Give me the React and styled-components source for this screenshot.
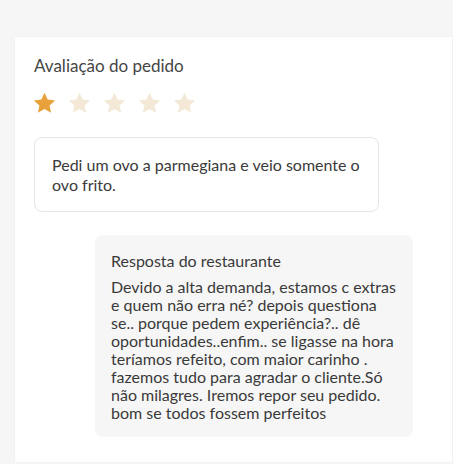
import React from 'react';
import styled, { createGlobalStyle } from 'styled-components';

const GlobalStyle = createGlobalStyle`
  html, body {
    margin: 0;
    padding: 0;
    background: #f6f6f6;
  }
  body {
    font-family: Lato, "Noto Sans", sans-serif;
    color: #3e3e3e;
  }
`;

const Page = styled.div`
  width: 453px;
  height: 464px;
  padding: 37px 1px 2px 15px;
  box-sizing: border-box;
  display: flex;
`;

const Card = styled.div`
  flex: 1;
  background: #fff;
  padding: 19px 19px 0 19px;
  box-shadow: 0 0 2px rgba(0, 0, 0, 0.05);
  display: flex;
  flex-direction: column;
`;

const Title = styled.h2`
  margin: 0;
  font-size: 17px;
  font-weight: 400;
  line-height: 20px;
  color: #454545;
`;

const Stars = styled.div`
  display: flex;
  gap: 12px;
  margin: 16px 0 0 -1px;
`;

const Star = ({ filled }) => (
  <svg width="23" height="22" viewBox="0 0 24 23">
    <path
      d="M12 0.8l3.3 7.1 7.8 0.9-5.8 5.3 1.6 7.7L12 17.9l-6.9 3.9 1.6-7.7L0.9 8.8l7.8-0.9z"
      fill={filled ? '#e9a23b' : '#f4e8d6'}
    />
  </svg>
);

const CommentBox = styled.div`
  margin-top: 23px;
  width: 345px;
  box-sizing: border-box;
  border: 1px solid #e6e6e6;
  border-radius: 8px;
  padding: 17px 17px 16px 17px;
  font-size: 16px;
  line-height: 20px;
  color: #3a3a3a;
`;

const Reply = styled.div`
  margin: 23px 0 0 61px;
  width: 318px;
  box-sizing: border-box;
  background: #f6f6f6;
  border-radius: 8px;
  padding: 16px 15px 15px 16px;
  color: #3a3a3a;
`;

const ReplyTitle = styled.div`
  font-size: 16px;
  line-height: 20px;
  margin-bottom: 7px;
`;

const ReplyText = styled.p`
  margin: 0;
  font-size: 16px;
  line-height: 18px;
`;

export default function App() {
  return (
    <>
      <GlobalStyle />
      <Page>
        <Card>
          <Title>Avaliação do pedido</Title>
          <Stars>
            {[1, 2, 3, 4, 5].map((n) => (
              <Star key={n} filled={n <= 1} />
            ))}
          </Stars>
          <CommentBox>Pedi um ovo a parmegiana e veio somente o ovo frito.</CommentBox>
          <Reply>
            <ReplyTitle>Resposta do restaurante</ReplyTitle>
            <ReplyText>
              Devido a alta demanda, estamos c extras e quem não erra né? depois questiona se.. porque pedem experiência?.. dê oportunidades..enfim.. se ligasse na hora teríamos refeito, com maior carinho . fazemos tudo para agradar o cliente.Só não milagres. Iremos repor seu pedido. bom se todos fossem perfeitos
            </ReplyText>
          </Reply>
        </Card>
      </Page>
    </>
  );
}
